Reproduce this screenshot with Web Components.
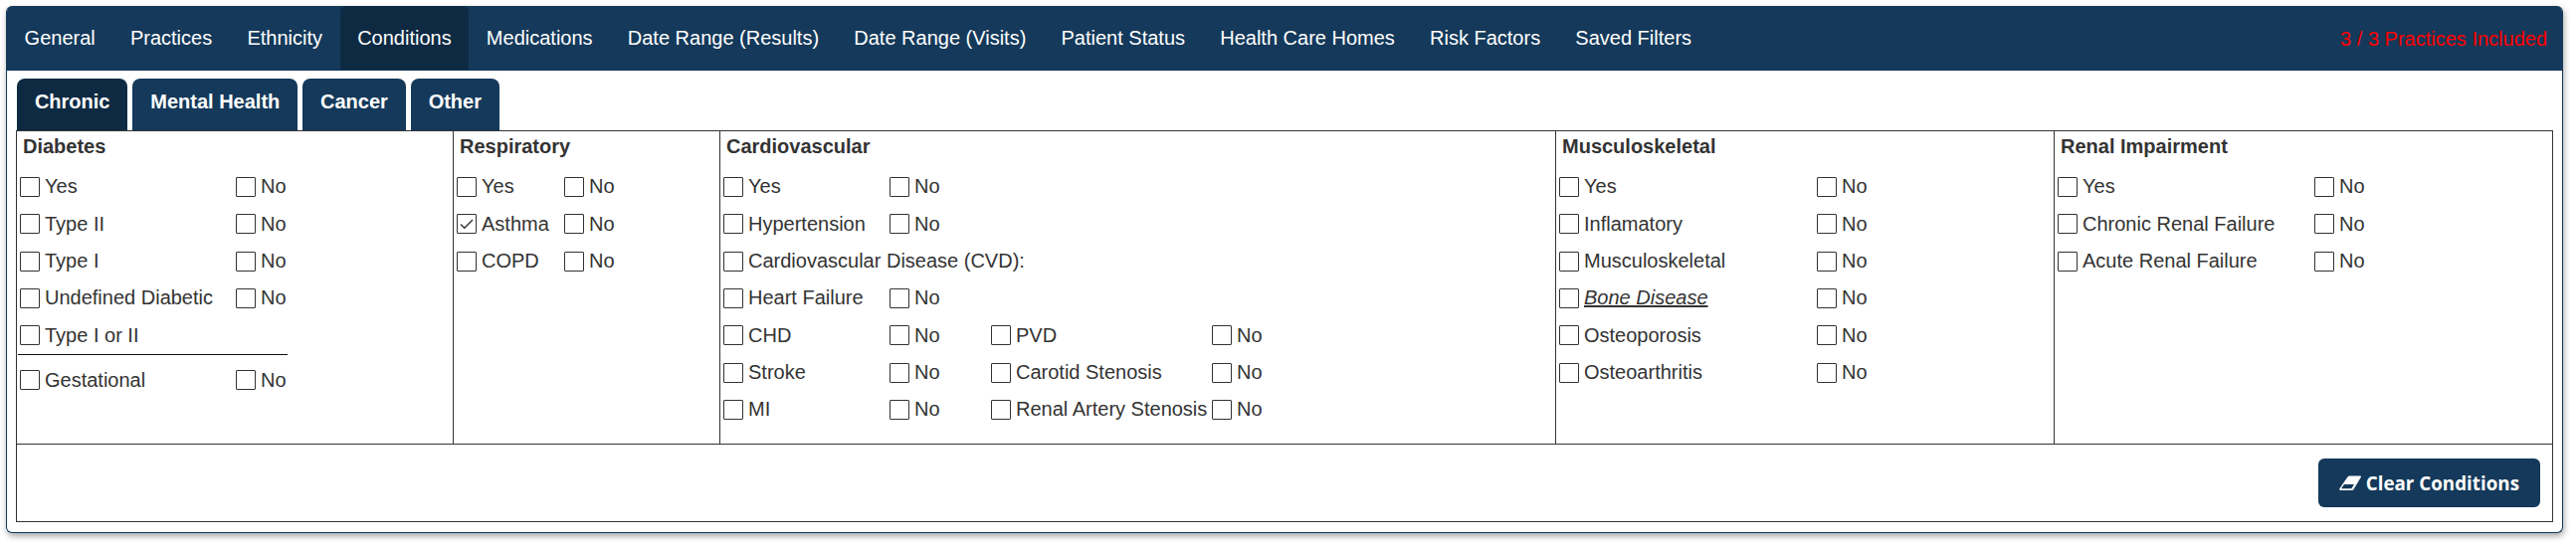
<!DOCTYPE html>
<html>
<head>
<meta charset="utf-8">
<title>Conditions</title>
<style>
html, body { margin: 0; background: #fff; }
body { padding: 6px 13px 19px 6px; font-family: "Liberation Sans", Arial, sans-serif; }
</style>
</head>
<body>
<filter-panel>
    <filter-nav slot="nav" note="3 / 3 Practices Included">
        <nav-item>General</nav-item>
        <nav-item>Practices</nav-item>
        <nav-item>Ethnicity</nav-item>
        <nav-item active>Conditions</nav-item>
        <nav-item>Medications</nav-item>
        <nav-item>Date Range (Results)</nav-item>
        <nav-item>Date Range (Visits)</nav-item>
        <nav-item>Patient Status</nav-item>
        <nav-item>Health Care Homes</nav-item>
        <nav-item>Risk Factors</nav-item>
        <nav-item>Saved Filters</nav-item>
    </filter-nav>
    <sub-tabs slot="tabs">
        <sub-tab active>Chronic</sub-tab>
        <sub-tab>Mental Health</sub-tab>
        <sub-tab>Cancer</sub-tab>
        <sub-tab>Other</sub-tab>
    </sub-tabs>
    <cond-table slot="table">
        <cond-group slot="cols" heading="Diabetes" style="width:439px" cols="217px 163px">
            <check-item>Yes</check-item><check-item>No</check-item>
            <check-item>Type II</check-item><check-item>No</check-item>
            <check-item>Type I</check-item><check-item>No</check-item>
            <check-item>Undefined Diabetic</check-item><check-item>No</check-item>
            <check-item>Type I or II</check-item><cond-gap></cond-gap>
            <cond-rule></cond-rule>
            <check-item>Gestational</check-item><check-item>No</check-item>
        </cond-group>
        <cond-group slot="cols" heading="Respiratory" style="width:268px" cols="108px 100px">
            <check-item>Yes</check-item><check-item>No</check-item>
            <check-item checked>Asthma</check-item><check-item>No</check-item>
            <check-item>COPD</check-item><check-item>No</check-item>
        </cond-group>
        <cond-group slot="cols" heading="Cardiovascular" style="width:840px" cols="167px 102px 222px 100px">
            <check-item>Yes</check-item><check-item>No</check-item><cond-gap></cond-gap><cond-gap></cond-gap>
            <check-item>Hypertension</check-item><check-item>No</check-item><cond-gap></cond-gap><cond-gap></cond-gap>
            <check-item wide>Cardiovascular Disease (CVD):</check-item>
            <check-item>Heart Failure</check-item><check-item>No</check-item><cond-gap></cond-gap><cond-gap></cond-gap>
            <check-item>CHD</check-item><check-item>No</check-item><check-item>PVD</check-item><check-item>No</check-item>
            <check-item>Stroke</check-item><check-item>No</check-item><check-item>Carotid Stenosis</check-item><check-item>No</check-item>
            <check-item>MI</check-item><check-item>No</check-item><check-item>Renal Artery Stenosis</check-item><check-item>No</check-item>
        </cond-group>
        <cond-group slot="cols" heading="Musculoskeletal" style="width:501px" cols="259px 100px">
            <check-item>Yes</check-item><check-item>No</check-item>
            <check-item>Inflamatory</check-item><check-item>No</check-item>
            <check-item>Musculoskeletal</check-item><check-item>No</check-item>
            <check-item em>Bone Disease</check-item><check-item>No</check-item>
            <check-item>Osteoporosis</check-item><check-item>No</check-item>
            <check-item>Osteoarthritis</check-item><check-item>No</check-item>
        </cond-group>
        <cond-group slot="cols" heading="Renal Impairment" style="flex:1" cols="258px 100px">
            <check-item>Yes</check-item><check-item>No</check-item>
            <check-item>Chronic Renal Failure</check-item><check-item>No</check-item>
            <check-item>Acute Renal Failure</check-item><check-item>No</check-item>
        </cond-group>
        <clear-button slot="foot">Clear Conditions</clear-button>
    </cond-table>
</filter-panel>

<script>
function shadow(el, html) {
    el.attachShadow({ mode: 'open' }).innerHTML = html;
}

class FilterPanel extends HTMLElement {
    constructor() {
        super();
        shadow(this, `
            <style>
                :host { display: block; height: 530px; box-sizing: border-box; background: #fff; border: 1px solid #14395a; border-top: 0; border-radius: 6px; box-shadow: 1px 3px 6px rgba(0,0,0,.35); overflow: hidden; }
                .body { padding: 8px 0 0 9px; }
            </style>
            <slot name="nav"></slot>
            <div class="body">
                <slot name="tabs"></slot>
                <slot name="table"></slot>
            </div>
        `);
    }
}

class FilterNav extends HTMLElement {
    constructor() {
        super();
        shadow(this, `
            <style>
                :host { display: flex; height: 65px; background: #14395a; }
                .items { display: flex; flex: 1; }
                .note { align-self: center; margin: 2px 15px 0 0; color: #f00; font-size: 20px; }
            </style>
            <div class="items"><slot></slot></div>
            <div class="note"></div>
        `);
        this.shadowRoot.querySelector('.note').textContent = this.getAttribute('note');
    }
}

class NavItem extends HTMLElement {
    constructor() {
        super();
        shadow(this, `
            <style>
                :host { display: flex; align-items: center; height: 64px; padding: 0 17.6px; color: #fff; font-size: 20px; border-radius: 6px 6px 0 0; }
                :host([active]) { background: #0e2a43; }
            </style>
            <slot></slot>
        `);
    }
}

class SubTabs extends HTMLElement {
    constructor() {
        super();
        shadow(this, `
            <style>
                :host { display: flex; gap: 5px; height: 52px; padding-left: 1px; }
            </style>
            <slot></slot>
        `);
    }
}

class SubTab extends HTMLElement {
    constructor() {
        super();
        shadow(this, `
            <style>
                :host { display: flex; align-items: center; padding: 0 17.9px 6px; background: #14395a; color: #fff; font-size: 20px; font-weight: bold; border-radius: 8px 8px 0 0; }
                :host([active]) { background: #0e2a43; }
            </style>
            <slot></slot>
        `);
    }
}

class CondTable extends HTMLElement {
    constructor() {
        super();
        shadow(this, `
            <style>
                :host { display: block; width: 2550px; box-sizing: border-box; border: 1px solid #333; }
                .cols { display: flex; height: 314px; border-bottom: 1px solid #333; }
                .foot { display: flex; justify-content: flex-end; height: 77px; padding: 14px 12px 0 0; box-sizing: border-box; }
            </style>
            <div class="cols"><slot name="cols"></slot></div>
            <div class="foot"><slot name="foot"></slot></div>
        `);
    }
}

class CondGroup extends HTMLElement {
    constructor() {
        super();
        shadow(this, `
            <style>
                :host { display: block; box-sizing: border-box; padding: 0 0 0 3px; border-right: 1px solid #333; color: #333; }
                :host(:last-of-type) { border-right: 0; }
                h4 { margin: 0; padding-left: 3px; height: 37.33px; line-height: 31px; font-size: 20px; font-weight: bold; color: #333; }
                .grid { display: grid; align-items: center; }
            </style>
            <h4></h4>
            <div class="grid"><slot></slot></div>
        `);
        this.shadowRoot.querySelector('h4').textContent = this.getAttribute('heading');
        this.shadowRoot.querySelector('.grid').style.gridTemplateColumns = this.getAttribute('cols');
    }
}

class CheckItem extends HTMLElement {
    constructor() {
        super();
        shadow(this, `
            <style>
                :host { display: flex; align-items: center; height: 37.33px; font-size: 20px; color: #333; white-space: nowrap; }
                :host([wide]) { grid-column: 1 / -1; }
                .box { flex: none; width: 20px; height: 20px; box-sizing: border-box; margin-right: 5px; border: 1px solid #333; border-radius: 1px; background: #fff; }
                svg { display: none; width: 18px; height: 18px; }
                :host([checked]) svg { display: block; }
                :host([em]) .label { font-style: italic; text-decoration: underline; }
            </style>
            <span class="box"><svg viewBox="0 0 18 18"><path d="M3 9.5l3.8 3.8L15 5" fill="none" stroke="#333" stroke-width="1.4"/></svg></span>
            <span class="label"><slot></slot></span>
        `);
    }
}

class CondGap extends HTMLElement {
    constructor() {
        super();
        shadow(this, `<style>:host { display: block; height: 37.33px; }</style>`);
    }
}

class CondRule extends HTMLElement {
    constructor() {
        super();
        shadow(this, `
            <style>
                :host { display: block; grid-column: 1 / -1; width: 271px; height: 1px; margin: 0 0 6.67px -2px; background: #111; }
            </style>
        `);
    }
}

class ClearButton extends HTMLElement {
    constructor() {
        super();
        shadow(this, `
            <style>
                :host { display: flex; align-items: center; gap: 5px; height: 49px; padding: 0 21px; background: #14395a; color: #fff; border-radius: 6px; font-family: "Open Sans", sans-serif; font-size: 18.8px; font-weight: bold; }
                svg { flex: none; width: 22px; height: 15px; }
            </style>
            <svg viewBox="0 0 22 15"><path d="M10.5.5H21q1.5 0 .7 1.5L14.5 14q-.5 1-1.5 1H1.5q-2 0-1-2L8.5 1.5q.7-1 2-1z" fill="#fff"/><path d="M5 9h10l-2.7 4.3H3q-1 0-.5-.8z" fill="#14395a"/></svg>
            <slot></slot>
        `);
    }
}

customElements.define('filter-panel', FilterPanel);
customElements.define('filter-nav', FilterNav);
customElements.define('nav-item', NavItem);
customElements.define('sub-tabs', SubTabs);
customElements.define('sub-tab', SubTab);
customElements.define('cond-table', CondTable);
customElements.define('cond-group', CondGroup);
customElements.define('check-item', CheckItem);
customElements.define('cond-gap', CondGap);
customElements.define('cond-rule', CondRule);
customElements.define('clear-button', ClearButton);
</script>
</body>
</html>
